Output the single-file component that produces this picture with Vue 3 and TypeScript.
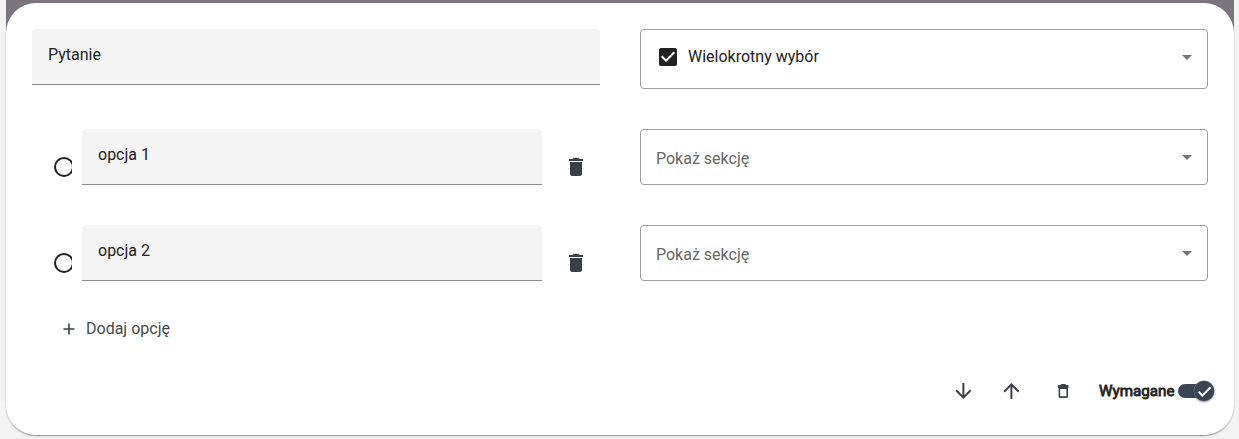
<script setup lang="ts">
import { ref } from 'vue'

interface Option {
  id: number
  label: string
}

const question = ref('Pytanie')
const options = ref<Option[]>([
  { id: 1, label: 'opcja 1' },
  { id: 2, label: 'opcja 2' },
])
const required = ref(true)
</script>

<template>
  <div class="page">
    <div class="backdrop">
      <section class="card">
        <div class="row head">
          <div class="filled"><span class="text">{{ question }}</span></div>
          <div class="outlined type">
            <svg class="check" width="24" height="24" viewBox="0 0 24 24">
              <path d="M19 3H5c-1.11 0-2 .9-2 2v14c0 1.1.89 2 2 2h14c1.11 0 2-.9 2-2V5c0-1.1-.89-2-2-2zm-9 14l-5-5 1.41-1.41L10 14.17l7.59-7.59L19 8l-9 9z" />
            </svg>
            <span class="text">Wielokrotny wybór</span>
            <svg class="caret" width="10" height="5" viewBox="0 0 10 5"><path d="M0 0h10L5 5z" /></svg>
          </div>
        </div>

        <div v-for="option in options" :key="option.id" class="row option">
          <div class="answer">
            <svg class="radio" width="18" height="24" viewBox="0 0 18 24">
              <circle cx="10" cy="12" r="9" />
            </svg>
            <div class="filled"><span class="text">{{ option.label }}</span></div>
            <button class="icon-button remove" type="button" aria-label="Usuń opcję">
              <svg width="24" height="24" viewBox="0 0 24 24">
                <path d="M6 19c0 1.1.9 2 2 2h8c1.1 0 2-.9 2-2V7H6v12zM19 4h-3.5l-1-1h-5l-1 1H5v2h14V4z" />
              </svg>
            </button>
          </div>
          <div class="outlined">
            <span class="text placeholder">Pokaż sekcję</span>
            <svg class="caret" width="10" height="5" viewBox="0 0 10 5"><path d="M0 0h10L5 5z" /></svg>
          </div>
        </div>

        <button class="add" type="button">
          <svg width="18" height="18" viewBox="0 0 18 18"><path d="M8.2 3.5h1.6v4.7h4.7v1.6H9.8v4.7H8.2V9.8H3.5V8.2h4.7z" /></svg>
          <span>Dodaj opcję</span>
        </button>

        <footer class="actions">
          <button class="icon-button" type="button" aria-label="W dół">
            <svg width="24" height="24" viewBox="-0.4 0 24 24">
              <path d="M20 12l-1.41-1.41L13 16.17V4h-2v12.17l-5.58-5.59L4 12l8 8 8-8z" />
            </svg>
          </button>
          <button class="icon-button" type="button" aria-label="W górę">
            <svg width="24" height="24" viewBox="-0.4 0 24 24">
              <path d="M4 12l1.41 1.41L11 7.83V20h2V7.83l5.58 5.59L20 12l-8-8-8 8z" />
            </svg>
          </button>
          <button class="icon-button bin" type="button" aria-label="Usuń pytanie">
            <svg width="12" height="16" viewBox="0 0 12 16">
              <path fill-rule="evenodd" d="M1 2h2.4L4.2 1h4l.8 1H11.5v3H11v8.4q0 1.6-1.6 1.6H3.2q-1.6 0-1.6-1.6V5H1zM3.2 6v7.3h6.2V6z" />
            </svg>
          </button>
          <span class="required">Wymagane</span>
          <button class="switch" type="button" role="switch" :aria-checked="required" @click="required = !required">
            <span class="thumb" :class="{ off: !required }">
              <svg width="17" height="17" viewBox="0 0 24 24">
                <path d="M19.69 5.23L8.96 15.96l-4.23-4.23L2.96 13.5l6 6L21.46 7z" />
              </svg>
            </span>
          </button>
        </footer>
      </section>
    </div>
  </div>
</template>

<style>
body {
  margin: 0;
  background: #f3f3f3;
}
</style>

<style scoped>
.page {
  box-sizing: border-box;
  height: 439px;
  padding: 0 5px 0 6px;
  overflow: hidden;
  background: #f3f3f3;
  font-family: Roboto, sans-serif;
  font-size: 16px;
  color: #212121;
}
.backdrop {
  padding-top: 3px;
  background: linear-gradient(#7c747e, #7c747e) top / 100% 31px no-repeat;
}
.card {
  box-sizing: border-box;
  height: 432px;
  padding: 26px;
  border-radius: 30px;
  background: #fff;
  box-shadow: 0 2px 1px -1px rgba(0, 0, 0, 0.2), 0 1px 1px rgba(0, 0, 0, 0.14), 0 1px 3px rgba(0, 0, 0, 0.12);
}
.row {
  display: grid;
  grid-template-columns: 568px 568px;
  column-gap: 40px;
  align-items: start;
}
.head {
  margin-bottom: 40px;
}
.option {
  margin-bottom: 40px;
}
.filled {
  box-sizing: border-box;
  height: 56px;
  padding: 14px 16px 0;
  border-bottom: 1px solid #8c8c8c;
  border-radius: 4px 4px 0 0;
  background: #f4f4f4;
}
.text {
  line-height: 24px;
  white-space: nowrap;
}
.outlined {
  box-sizing: border-box;
  display: flex;
  align-items: center;
  height: 56px;
  padding: 0 15px;
  border: 1px solid #9e9e9e;
  border-radius: 4px;
}
.outlined .text {
  padding-top: 3px;
}
.type {
  height: 60px;
  padding-bottom: 4px;
}
.type .text {
  padding-top: 0;
}
.check {
  margin-right: 8px;
  fill: #212121;
}
.caret {
  margin-left: auto;
  fill: #757575;
}
.placeholder {
  color: #666;
}
.answer {
  display: flex;
  height: 56px;
}
.answer .filled {
  width: 460px;
}
.radio {
  margin: 26px 10px 0 22px;
  fill: none;
  stroke: #212121;
  stroke-width: 2;
}
button {
  padding: 0;
  border: 0;
  background: none;
  font: inherit;
  cursor: pointer;
}
.icon-button {
  display: flex;
  align-items: center;
  justify-content: center;
  width: 48px;
  height: 48px;
  fill: #3a3f4c;
}
.remove {
  margin: 14px 0 0 10px;
}
.add {
  display: flex;
  align-items: center;
  gap: 8px;
  height: 36px;
  margin: -11px 0 0 28px;
  color: #48484c;
  fill: #3a3f4c;
}
.add svg {
  margin-top: 2px;
}
.actions {
  display: flex;
  align-items: center;
  justify-content: flex-end;
  height: 48px;
  margin: 21px -6px 0 0;
}
.bin {
  margin-left: 4px;
}
.required {
  width: 75px;
  margin-left: 12px;
  font-size: 15.2px;
  white-space: nowrap;
  -webkit-text-stroke: 0.8px #212121;
}
.switch {
  display: flex;
  align-items: center;
  justify-content: flex-end;
  width: 36px;
  height: 14px;
  margin-left: 4px;
  border-radius: 7px;
  background: #3b4654;
}
.thumb {
  display: flex;
  align-items: center;
  justify-content: center;
  flex: none;
  width: 20px;
  height: 20px;
  border-radius: 50%;
  background: #3b4250;
  box-shadow: 0 0 0 0.5px #77808c, 0 1px 3px rgba(0, 0, 0, 0.4);
}
.thumb svg {
  fill: #fff;
  stroke: #fff;
  stroke-width: 0.5;
}
.thumb.off {
  margin-right: auto;
}
</style>
